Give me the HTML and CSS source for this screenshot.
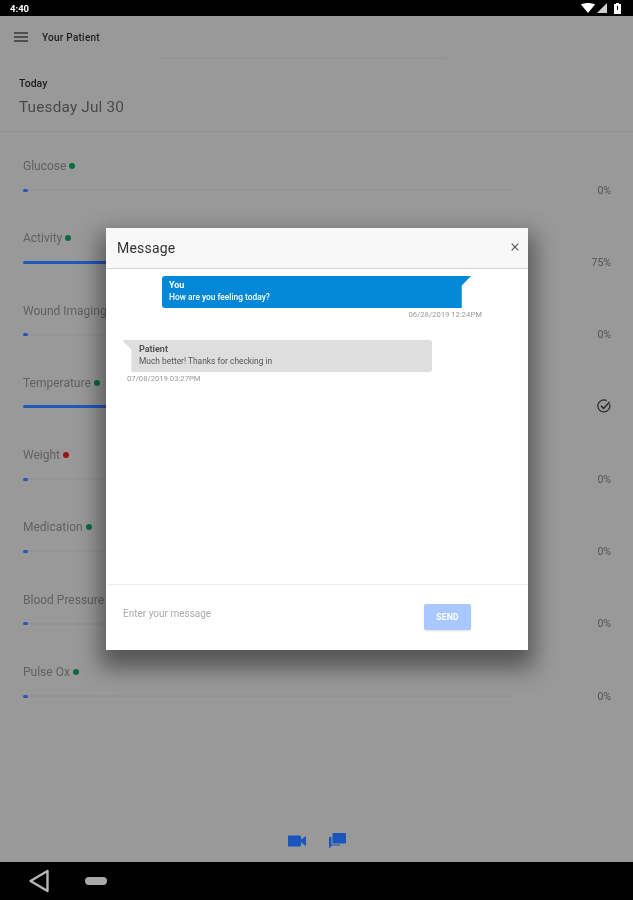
FILE: index.html
```html
<!DOCTYPE html>
<html lang="en">
<head>
<meta charset="utf-8">
<title>Your Patient</title>
<link rel="stylesheet" href="styles.css">
</head>
<body>
<div class="device">
  <div class="statusbar">
    <span class="clock">4:40</span>
    <div class="status-icons">
      <svg width="14" height="10" viewBox="0 0 14 10"><path d="M0 1.500C4 -.5 10 -.5 14 1.500L7 10Z" fill="#fff"/></svg>
      <svg width="10" height="10" viewBox="0 0 10 10"><path d="M10 0V10H0Z" fill="#cfcfcf"/></svg>
      <svg class="battery" width="7" height="11" viewBox="0 0 7 11"><path d="M2 0H5V1H7V11H0V1H2Z" fill="#fff"/><rect x="3" y="3" width="1" height="4" fill="#000"/></svg>
    </div>
  </div>
  <main class="screen">
    <header class="toolbar">
      <svg class="menu" width="14" height="10" viewBox="0 0 14 10"><path d="M0 1H14M0 5H14M0 9H14" stroke="#5c5c5c" stroke-width="1.300"/></svg>
      <span class="toolbar-title">Your Patient</span>
    </header>
    <div class="toolbar-rule"></div>
    <section class="date-block">
      <div class="today">Today</div>
      <div class="date">Tuesday Jul 30</div>
    </section>
    <section class="metrics">
      <div class="metric"><div class="metric-label">Glucose <i class="dot green"></i></div><div class="metric-row"><div class="track"><div class="fill"></div></div><span class="value">0%</span></div></div>
      <div class="metric"><div class="metric-label">Activity <i class="dot green"></i></div><div class="metric-row"><div class="track"><div class="fill" style="width:75%"></div></div><span class="value">75%</span></div></div>
      <div class="metric"><div class="metric-label">Wound Imaging</div><div class="metric-row"><div class="track"><div class="fill"></div></div><span class="value">0%</span></div></div>
      <div class="metric"><div class="metric-label">Temperature <i class="dot green"></i></div><div class="metric-row"><div class="track"><div class="fill" style="width:100%"></div></div><span class="value"><svg class="done" width="14" height="14" viewBox="0 0 14 14" fill="none" stroke="#444" stroke-width="1.200"><path d="M12.600 5.200A6 6 0 1 1 9.600 1.600"/><path d="M3.900 6.800 6.600 9.400 12.600 3" stroke-width="1.500"/></svg></span></div></div>
      <div class="metric"><div class="metric-label">Weight <i class="dot red"></i></div><div class="metric-row"><div class="track"><div class="fill"></div></div><span class="value">0%</span></div></div>
      <div class="metric"><div class="metric-label">Medication <i class="dot green"></i></div><div class="metric-row"><div class="track"><div class="fill"></div></div><span class="value">0%</span></div></div>
      <div class="metric"><div class="metric-label">Blood Pressure</div><div class="metric-row"><div class="track"><div class="fill"></div></div><span class="value">0%</span></div></div>
      <div class="metric"><div class="metric-label">Pulse Ox <i class="dot green"></i></div><div class="metric-row"><div class="track"><div class="fill"></div></div><span class="value">0%</span></div></div>
    </section>
    <footer class="actions">
      <svg width="18" height="12" viewBox="0 0 18 12"><path d="M0 1.500A1 1 0 0 1 1 .5H12A1 1 0 0 1 13 1.500V4.500L18 1V11L13 7.500V10.500A1 1 0 0 1 12 11.500H1A1 1 0 0 1 0 10.500Z" fill="#1a55bd"/></svg>
      <svg width="17" height="16" viewBox="0 0 17 16"><path d="M0 4H2.500V11.500H11V12.500H3L0 15.500Z" fill="#1a55bd"/><path d="M3.500 1A1 1 0 0 1 4.500 0H16A1 1 0 0 1 17 1V9.500A1 1 0 0 1 16 10.500H3.500Z" fill="#1a55bd"/></svg>
    </footer>
    <div class="scrim"></div>
    <div class="dialog">
      <div class="dialog-head">
        <span class="dialog-title">Message</span>
        <svg class="close" width="8" height="8" viewBox="0 0 8 8"><path d="M.7.7 7.300 7.300M7.300.7.7 7.300" stroke="#555" stroke-width="1.200"/></svg>
      </div>
      <div class="thread">
        <div class="bubble-wrap mine">
          <div class="bubble bubble-mine"><b>You</b><span>How are you feeling today?</span></div>
          <div class="stamp">06/28/2019 12:24PM</div>
        </div>
        <div class="bubble-wrap theirs">
          <div class="bubble bubble-theirs"><b>Patient</b><span>Much better! Thanks for checking in</span></div>
          <div class="stamp">07/08/2019 03:27PM</div>
        </div>
      </div>
      <div class="composer">
        <span class="placeholder">Enter your message</span>
        <button class="send" type="button">SEND</button>
      </div>
    </div>
  </main>
  <nav class="navbar">
    <svg width="22" height="24" viewBox="0 0 22 24"><path d="M19.500 2 2.500 12 19.500 22Z" fill="none" stroke="#b5b5b5" stroke-width="2.400" stroke-linejoin="round"/></svg>
    <span class="home-pill"></span>
  </nav>
</div>
</body>
</html>
```
FILE: styles.css
```css
* { box-sizing: border-box; }
html, body { margin: 0; padding: 0; background: #000; }
body { font-family: Roboto, "Liberation Sans", sans-serif; }
.device { width: 633px; height: 900px; display: flex; flex-direction: column; overflow: hidden; filter: blur(.6px); }

.statusbar { height: 16px; flex: none; background: #000; display: flex; align-items: center; justify-content: space-between; padding: 0 12px 0 10px; position: relative; z-index: 3; }
.clock { color: #fff; font-size: 9.500px; font-weight: 700; }
.status-icons { display: flex; align-items: center; gap: 2px; }
.battery { margin-left: 5px; }

.screen { flex: 1; position: relative; background: #fff; display: flex; flex-direction: column; }
.toolbar { height: 42px; flex: none; display: flex; align-items: center; padding: 0 0 0 14px; }
.toolbar-title { margin-left: 14px; font-size: 10px; font-weight: 500; color: #333; letter-spacing: .25px; }
.toolbar-rule { height: 1px; margin-left: 160px; margin-right: 186px; background: #f3f3f3; flex: none; }
.date-block { flex: none; height: 73px; padding: 18px 0 0 19px; border-bottom: 1px solid #f3f3f3; }
.today { font-size: 10.500px; font-weight: 500; color: #333; }
.date { margin-top: 8px; font-size: 15.300px; color: #7a7a7a; letter-spacing: .2px; }

.metrics { flex: 1; padding: 26px 22px 0 23px; }
.metric { height: 72.300px; }
.metric-label { height: 16px; font-size: 12px; color: #a2a2a2; display: flex; align-items: center; gap: 3px; }
.dot { width: 6px; height: 6px; border-radius: 50%; display: block; }
.green { background: #10b36b; }
.red { background: #ff2020; }
.metric-row { display: flex; align-items: center; justify-content: space-between; height: 12px; margin-top: 10px; }
.track { width: 490px; height: 2px; background: #f7f7f7; position: relative; }
.fill { width: 5px; height: 3px; border-radius: 2px; background: #2456bb; position: absolute; left: 0; top: -.5px; z-index: 1; }
.value { font-size: 10.500px; color: #8a8a8a; width: 15px; white-space: nowrap; display: flex; justify-content: flex-end; }
.done { margin-top: -1px; }

.actions { height: 42px; flex: none; display: flex; align-items: center; justify-content: center; gap: 23px; margin-top: auto; position: relative; z-index: 1; }

.scrim { position: absolute; inset: 0; background: rgba(0,0,0,.4); }

.dialog { position: absolute; left: 106px; top: 212px; width: 422px; height: 422px; background: #fff; display: flex; flex-direction: column; z-index: 2; box-shadow: 0 12px 22px 6px rgba(0,0,0,.45); }
.dialog-head { height: 41px; flex: none; background: #f8f8f8; border-bottom: 1px solid #d4d4d4; display: flex; align-items: center; justify-content: space-between; padding: 0 9px 0 11px; }
.dialog-title { font-size: 14px; color: #333; letter-spacing: .2px; }
.close { margin-top: -3px; }
.thread { flex: 1; padding: 7px 0 0 0; display: flex; flex-direction: column; }
.bubble-wrap { display: flex; flex-direction: column; }
.bubble { height: 32px; padding: 4px 7px 0; display: flex; flex-direction: column; gap: 2px; }
.bubble b { font-size: 9px; font-weight: 700; line-height: 10px; }
.bubble span { font-size: 8.400px; line-height: 10px; font-weight: 500; }
.mine { margin-left: 56px; width: 320px; }
.bubble-mine { width: 309px; color: #fff; background: #0288d6; border-radius: 3px 0 3px 3px; clip-path: polygon(0 0, 100% 0, 97% 30%, 97% 100%, 0 100%); }
.mine .stamp { text-align: right; margin-top: 2px; }
.theirs { margin-top: 21px; margin-left: 16px; width: 310px; }
.bubble-theirs { color: #555; background: #dedede; clip-path: polygon(0 0, 100% 0, 100% 100%, 3% 100%, 3% 30%); padding-left: 17px; border-radius: 3px; }
.bubble-theirs span { font-weight: 400; }
.theirs .stamp { margin-top: 2px; padding-left: 5px; }
.stamp { font-size: 7.700px; line-height: 9px; color: #999; }
.composer { height: 66px; flex: none; margin: 0 0 0 1px; border-top: 1px solid #eee; display: flex; align-items: center; justify-content: space-between; padding: 0 57px 6px 16px; }
.placeholder { font-size: 10px; color: #aaa; margin-top: -2px; }
.send { width: 47px; height: 26px; border: 0; border-radius: 2px; padding: 0; margin-top: 4px; background: #a8c8ff; color: #fff; font-family: inherit; font-size: 8.500px; font-weight: 700; letter-spacing: .2px; box-shadow: 0 1px 2px rgba(0,0,0,.12); }

.navbar { height: 38px; flex: none; background: #000; display: flex; align-items: center; gap: 35px; padding-left: 28px; position: relative; z-index: 3; }
.home-pill { width: 22px; height: 8px; border-radius: 4px; background: #a8a8a8; }
```
